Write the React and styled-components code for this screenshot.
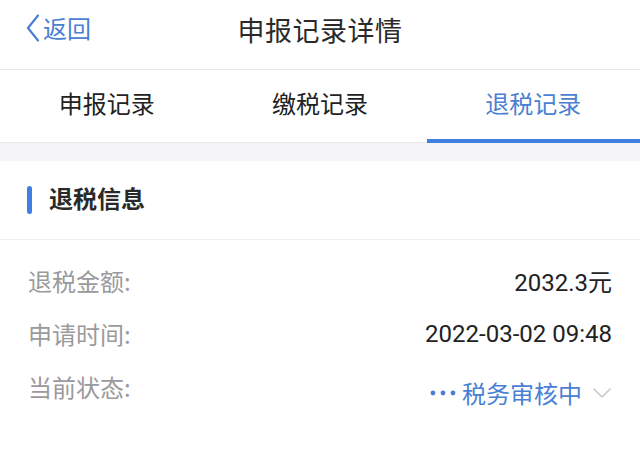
import React from "react";
import styled, { createGlobalStyle } from "styled-components";

const GlobalStyle = createGlobalStyle`
  html, body {
    margin: 0;
    padding: 0;
    background: #ffffff;
  }
  body {
    font-family: "Noto Sans CJK SC", "Noto Sans", sans-serif;
    color: #222;
  }
`;

const tabs = ["申报记录", "缴税记录", "退税记录"];

const rows = [
  { label: "退税金额:", value: "2032.3元" },
  { label: "申请时间:", value: "2022-03-02 09:48" },
];

const App = () => {
  const [active, setActive] = React.useState(2);

  return (
    <Page>
      <GlobalStyle />
      <Header>
        <Back>
          <svg width="16" height="28" viewBox="0 0 16 28">
            <path
              d="M13 1.5 L3 14 L13 26.5"
              fill="none"
              stroke="#4a7fd3"
              strokeWidth="2.2"
              strokeLinecap="round"
              strokeLinejoin="round"
            />
          </svg>
          <span>返回</span>
        </Back>
        <Title>申报记录详情</Title>
      </Header>

      <TabBar>
        {tabs.map((t, i) => (
          <Tab key={t} $active={i === active} onClick={() => setActive(i)}>
            {t}
          </Tab>
        ))}
      </TabBar>

      <Gap />

      <SectionHead>
        <Marker />
        <SectionTitle>退税信息</SectionTitle>
      </SectionHead>

      <Rows>
        {rows.map(({ label, value }) => (
          <Row key={label}>
            <Label>{label}</Label>
            <Value>{value}</Value>
          </Row>
        ))}
        <Row>
          <Label>当前状态:</Label>
          <Status>
            <svg width="26" height="6" viewBox="0 0 26 6">
              <circle cx="3" cy="3" r="2.4" fill="#4a7fd3" />
              <circle cx="13" cy="3" r="2.4" fill="#4a7fd3" />
              <circle cx="23" cy="3" r="2.4" fill="#4a7fd3" />
            </svg>
            <span>税务审核中</span>
            <Caret width="20" height="12" viewBox="0 0 20 12">
              <path
                d="M2 2 L10 10 L18 2"
                fill="none"
                stroke="#c8c8cc"
                strokeWidth="1.6"
                strokeLinecap="round"
                strokeLinejoin="round"
              />
            </Caret>
          </Status>
        </Row>
      </Rows>
    </Page>
  );
};

export default App;

const Page = styled.div`
  width: 640px;
  min-height: 452px;
  background: #fff;
`;

const Header = styled.div`
  position: relative;
  height: 69px;
  display: flex;
  align-items: center;
  justify-content: center;
  border-bottom: 1px solid #e6e6e8;
`;

const Back = styled.div`
  position: absolute;
  left: 25px;
  top: 14px;
  display: flex;
  align-items: center;
  gap: 2px;
  color: #4a7fd3;
  font-size: 24px;
  line-height: 28px;
`;

const Title = styled.div`
  font-size: 27px;
  color: #2a2a2a;
  margin-top: -10px;
  letter-spacing: 0.5px;
`;

const TabBar = styled.div`
  display: grid;
  grid-template-columns: repeat(3, 1fr);
  height: 72px;
  border-bottom: 1px solid #e8e8ea;
`;

const Tab = styled.div`
  display: flex;
  align-items: center;
  justify-content: center;
  font-size: 24px;
  padding-bottom: 4px;
  color: ${(p) => (p.$active ? "#4a7fd3" : "#222")};
  border-bottom: 4px solid ${(p) => (p.$active ? "#3f7fe2" : "transparent")};
  margin-bottom: -1px;
  cursor: pointer;
`;

const Gap = styled.div`
  height: 18px;
  background: #f5f5f8;
`;

const SectionHead = styled.div`
  height: 78px;
  display: flex;
  align-items: center;
  padding-left: 27px;
  gap: 17px;
  border-bottom: 1px solid #eeeef0;
`;

const Marker = styled.div`
  width: 5px;
  height: 28px;
  border-radius: 3px;
  background: #3f7fe2;
`;

const SectionTitle = styled.div`
  font-size: 24px;
  font-weight: 700;
  color: #2a2a2a;
  margin-top: -6px;
`;

const Rows = styled.div`
  padding: 14px 28px 0 28px;
  display: flex;
  flex-direction: column;
`;

const Row = styled.div`
  height: 53px;
  display: flex;
  align-items: center;
  justify-content: space-between;
`;

const Label = styled.div`
  font-size: 24px;
  color: #9a9a9c;
`;

const Value = styled.div`
  font-family: "Roboto", "Noto Sans CJK SC", sans-serif;
  font-size: 24px;
  color: #222;
`;

const Status = styled.div`
  display: flex;
  align-items: center;
  gap: 6px;
  font-size: 24px;
  color: #4a7fd3;
  margin-top: 12px;
`;

const Caret = styled.svg`
  margin-left: 4px;
`;
